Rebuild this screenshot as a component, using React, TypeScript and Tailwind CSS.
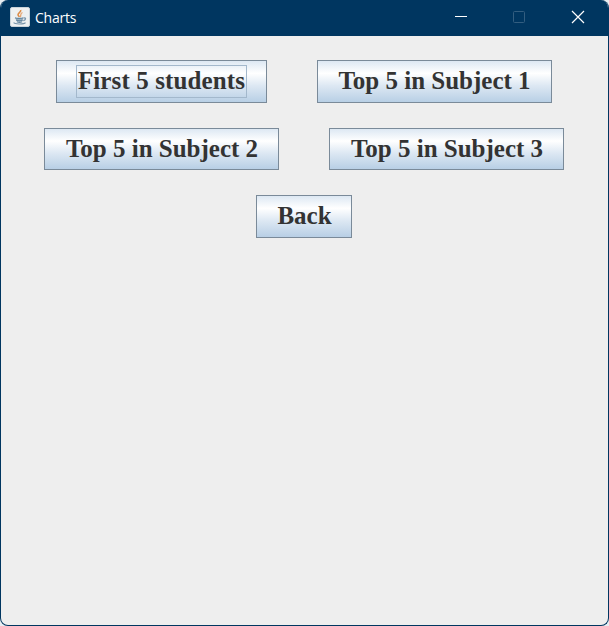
import type { ReactNode } from "react";

function JavaIcon() {
  return (
    <svg width="20" height="20" viewBox="0 0 20 20" fill="none">
      <rect x="0.5" y="0.5" width="19" height="19" rx="1.5" fill="#edf0f1" stroke="#c9d3da" />
      <path d="M10.7 3C11.5 5 7 6.2 8.1 8.2C8.5 9 9.1 9.3 9.3 10" stroke="#dc8a45" strokeWidth="1.6" />
      <path d="M12.5 5.5C9.5 6.8 11.7 8 10.2 10" stroke="#e5a571" strokeWidth="1.3" />
      <path d="M5.2 10.9H13.2L12.3 14H6.5Z" fill="#9bb0bf" />
      <path d="M5 10.8C7 11.7 11.5 11.6 13.4 10.8M6.2 13C8 14 11 13.9 12.7 13M6.8 14.8C8.5 15.5 10.7 15.4 12.2 14.8" stroke="#64869f" strokeWidth="1.2" />
      <path d="M13.5 11C16.7 10.5 15.8 13.2 13.3 13.7M4 15.3C3.5 17.5 14 17.5 15.5 15.6" stroke="#7894aa" strokeWidth="1.2" />
    </svg>
  );
}

function MetalButton({ size, focused = false, children }: { size: string; focused?: boolean; children: ReactNode }) {
  return (
    <button
      className={`${size} ${focused ? "pt-1" : "pt-[5px]"} flex shrink-0 items-start justify-center border border-[#7a8a99] bg-[linear-gradient(to_bottom,#dde8f3_0%,#ffffff_30%,#dde8f3_60%,#b8cfe5_100%)] font-['Liberation_Serif',serif] text-[25px] leading-[29px] font-bold whitespace-nowrap text-[#333333]`}
    >
      {focused ? (
        <span className="flex h-[33px] w-[171px] items-start justify-center border border-[#a3b8cc] tracking-[0.12px]">{children}</span>
      ) : (
        <span>{children}</span>
      )}
    </button>
  );
}

export default function App() {
  return (
    <div className="h-[626px] w-[609px] bg-[#e8edf1]">
      <div className="flex h-full flex-col overflow-hidden rounded-[8px] border-x border-b border-[#003660] bg-[#eeeeee]">
        <header className="flex h-9 shrink-0 items-start bg-[#003660] text-white">
          <div className="flex h-[34px] items-center gap-[5px] pl-[9px]">
            <JavaIcon />
            <span className="pt-px font-['Open_Sans','Noto_Sans',sans-serif] text-[14px] leading-5 tracking-[-0.25px]">Charts</span>
          </div>
          <div className="ml-auto flex h-[34px] items-center">
            <svg width="58" height="34" fill="none"><path d="M23 16.5H35" stroke="white" /></svg>
            <svg width="58" height="34" fill="none"><rect x="23.5" y="11.5" width="11" height="11" rx="1" stroke="#335e80" /></svg>
            <svg width="60" height="34" fill="none"><path d="M24 11L36 23M36 11L24 23" stroke="white" strokeWidth="1.2" /></svg>
          </div>
        </header>
        <main className="flex flex-col items-center gap-[25px] pt-6 pr-px">
          <div className="flex gap-[50px]">
            <MetalButton size="h-[43px] w-[211px]" focused>First 5 students</MetalButton>
            <MetalButton size="h-[43px] w-[235px]">Top 5 in Subject 1</MetalButton>
          </div>
          <div className="flex gap-[50px]">
            <MetalButton size="h-[42px] w-[235px] pl-px">Top 5 in Subject 2</MetalButton>
            <MetalButton size="h-[42px] w-[235px] pl-px">Top 5 in Subject 3</MetalButton>
          </div>
          <MetalButton size="h-[43px] w-24 pl-px">Back</MetalButton>
        </main>
      </div>
    </div>
  );
}
